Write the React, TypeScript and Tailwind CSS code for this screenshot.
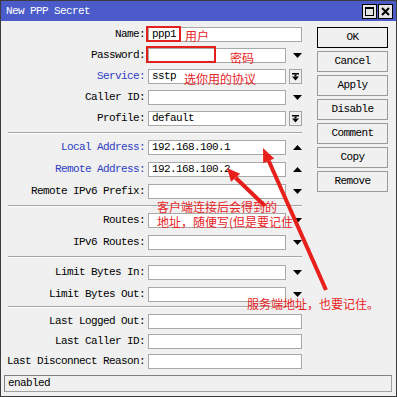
import type { ReactElement } from 'react';

type Kind = 'none' | 'down' | 'up' | 'box';

type Field = {
  label: string;
  value?: string;
  blue?: boolean;
  kind: Kind;
};

const groups: { rows: Field[]; gap: string; mt: string }[] = [
  {
    gap: 'gap-[6px]',
    mt: 'mt-0',
    rows: [
      { label: 'Name', value: 'ppp1', kind: 'none' },
      { label: 'Password', kind: 'down' },
      { label: 'Service', value: 'sstp', blue: true, kind: 'box' },
      { label: 'Caller ID', kind: 'down' },
      { label: 'Profile', value: 'default', kind: 'box' },
    ],
  },
  {
    gap: 'gap-[7px]',
    mt: 'mt-[6px]',
    rows: [
      { label: 'Local Address', value: '192.168.100.1', blue: true, kind: 'up' },
      { label: 'Remote Address', value: '192.168.100.2', blue: true, kind: 'up' },
      { label: 'Remote IPv6 Prefix', kind: 'down' },
    ],
  },
  {
    gap: 'gap-[7px]',
    mt: 'mt-[6px]',
    rows: [
      { label: 'Routes', kind: 'down' },
      { label: 'IPv6 Routes', kind: 'down' },
    ],
  },
  {
    gap: 'gap-[7px]',
    mt: 'mt-[7px]',
    rows: [
      { label: 'Limit Bytes In', kind: 'down' },
      { label: 'Limit Bytes Out', kind: 'down' },
    ],
  },
  {
    gap: 'gap-[5px]',
    mt: 'mt-[6px]',
    rows: [
      { label: 'Last Logged Out', kind: 'none' },
      { label: 'Last Caller ID', kind: 'none' },
      { label: 'Last Disconnect Reason', kind: 'none' },
    ],
  },
];

const sepMargins = ['mt-[6px]', 'mt-[6px]', 'mt-[6px]', 'mt-[4px]'];

const buttons = ['OK', 'Cancel', 'Apply', 'Disable', 'Comment', 'Copy', 'Remove'];

function Indicator({ kind }: { kind: Kind }): ReactElement | null {
  if (kind === 'down')
    return (
      <svg width="9" height="6" viewBox="0 0 9 6" className="ml-[7px]">
        <polygon points="0,0 9,0 4.5,5" fill="#000" />
      </svg>
    );
  if (kind === 'up')
    return (
      <svg width="9" height="6" viewBox="0 0 9 6" className="ml-[7px]">
        <polygon points="0,5 9,5 4.5,0" fill="#000" />
      </svg>
    );
  if (kind === 'box')
    return (
      <div className="ml-[3px] flex h-[15px] w-[13px] items-center justify-center border border-[#a3a3a3] bg-[#f0f0f0]">
        <svg width="7" height="8" viewBox="0 0 7 8">
          <rect x="0" y="0" width="7" height="1.5" fill="#000" />
          <rect x="2.5" y="1.5" width="2" height="2" fill="#000" />
          <polygon points="0,3.5 7,3.5 3.5,7.5" fill="#000" />
        </svg>
      </div>
    );
  return null;
}

function Row({ f }: { f: Field }): ReactElement {
  const full = f.kind === 'none';
  return (
    <div className="flex h-[15px] items-center">
      <div className={`w-[141px] whitespace-nowrap text-right ${f.blue ? 'text-[#2d3cc6]' : 'text-black'}`}>
        {f.label}:
      </div>
      <div
        className={`ml-[3px] flex h-[15px] items-center border border-[#a8a8a8] bg-white pl-[3px] ${full ? 'w-[154px]' : 'w-[138px]'}`}
      >
        {f.value}
      </div>
      <Indicator kind={f.kind} />
    </div>
  );
}

export default function App(): ReactElement {
  return (
    <div className="relative h-[397px] w-[397px] overflow-hidden border border-[#3c3c3c] bg-[#f0f0f0] font-['Liberation_Mono',monospace] text-[11px] leading-[13px] tracking-[-0.6px] text-black">
      <div className="flex h-[20px] items-center bg-[#4b5cca] pl-[5px] pr-[3px]">
        <span className="text-white">New PPP Secret</span>
        <div className="ml-auto flex gap-[1px]">
          <div className="flex h-[15px] w-[15px] items-center justify-center border border-black bg-[#e4e4e4]">
            <div className="h-[9px] w-[9px] border border-black border-t-2" />
          </div>
          <div className="flex h-[15px] w-[15px] items-center justify-center border border-black bg-[#e4e4e4]">
            <svg width="9" height="9" viewBox="0 0 9 9">
              <path d="M1 1 L8 8 M8 1 L1 8" stroke="#000" strokeWidth="2" />
            </svg>
          </div>
        </div>
      </div>

      <div className="flex pl-[3px] pt-[6px]">
        <div className="flex w-[298px] flex-col">
          {groups.map((g, i) => (
            <div key={i} className="flex flex-col">
              <div className={`flex flex-col ${g.gap} ${g.mt}`}>
                {g.rows.map((r) => (
                  <Row key={r.label} f={r} />
                ))}
              </div>
              {i < sepMargins.length && (
                <div className={`ml-[4px] h-[2px] w-[294px] border-t border-b border-t-[#a6a6a6] border-b-white ${sepMargins[i]}`} />
              )}
            </div>
          ))}
        </div>
        <div className="ml-[15px] flex w-[71px] flex-col gap-[3px]">
          {buttons.map((b) => (
            <div
              key={b}
              className={`flex h-[21px] items-center justify-center border bg-[#f0f0f0] ${b === 'OK' ? 'border-black' : 'border-[#9a9a9a]'}`}
            >
              {b}
            </div>
          ))}
        </div>
      </div>

      <div className="mx-[3px] mt-[6px] flex h-[17px] w-[388px] items-center border border-[#a0a0a0] border-l-[#808080] border-t-[#808080] pl-[3px]">
        enabled
      </div>

      {/* annotations */}
      <div className="pointer-events-none absolute left-[145px] top-[25px] h-[16px] w-[35px] border-2 border-[#e3201e]" />
      <div className="pointer-events-none absolute left-[145px] top-[45px] h-[17px] w-[70px] border-2 border-[#e3201e]" />
      <div className="absolute inset-0 font-['Noto_Sans_CJK_SC',sans-serif] text-[12px] leading-[15px] tracking-normal text-[#e8231f]">
        <span className="absolute left-[184px] top-[27px]">用户</span>
        <span className="absolute left-[229px] top-[49px]">密码</span>
        <span className="absolute left-[183px] top-[70px]">选你用的协议</span>
        <div className="absolute left-[156px] top-[198px] whitespace-nowrap">
          <div>客户端连接后会得到的</div>
          <div>地址，随便写(但是要记住</div>
        </div>
        <span className="absolute left-[246px] top-[295px] whitespace-nowrap">服务端地址，也要记住。</span>
      </div>
      <svg className="pointer-events-none absolute left-0 top-0" width="397" height="397" viewBox="0 0 397 397">
        <line x1="325" y1="289" x2="267.7" y2="159.8" stroke="#e8201c" strokeWidth="4" />
        <polygon points="262,147 273.2,157.4 262.2,162.2" fill="#e8201c" />
        <line x1="264" y1="205" x2="234.6" y2="176.7" stroke="#e8201c" strokeWidth="4" />
        <polygon points="226,167 239.1,172.7 230.1,180.7" fill="#e8201c" />
      </svg>
    </div>
  );
}
